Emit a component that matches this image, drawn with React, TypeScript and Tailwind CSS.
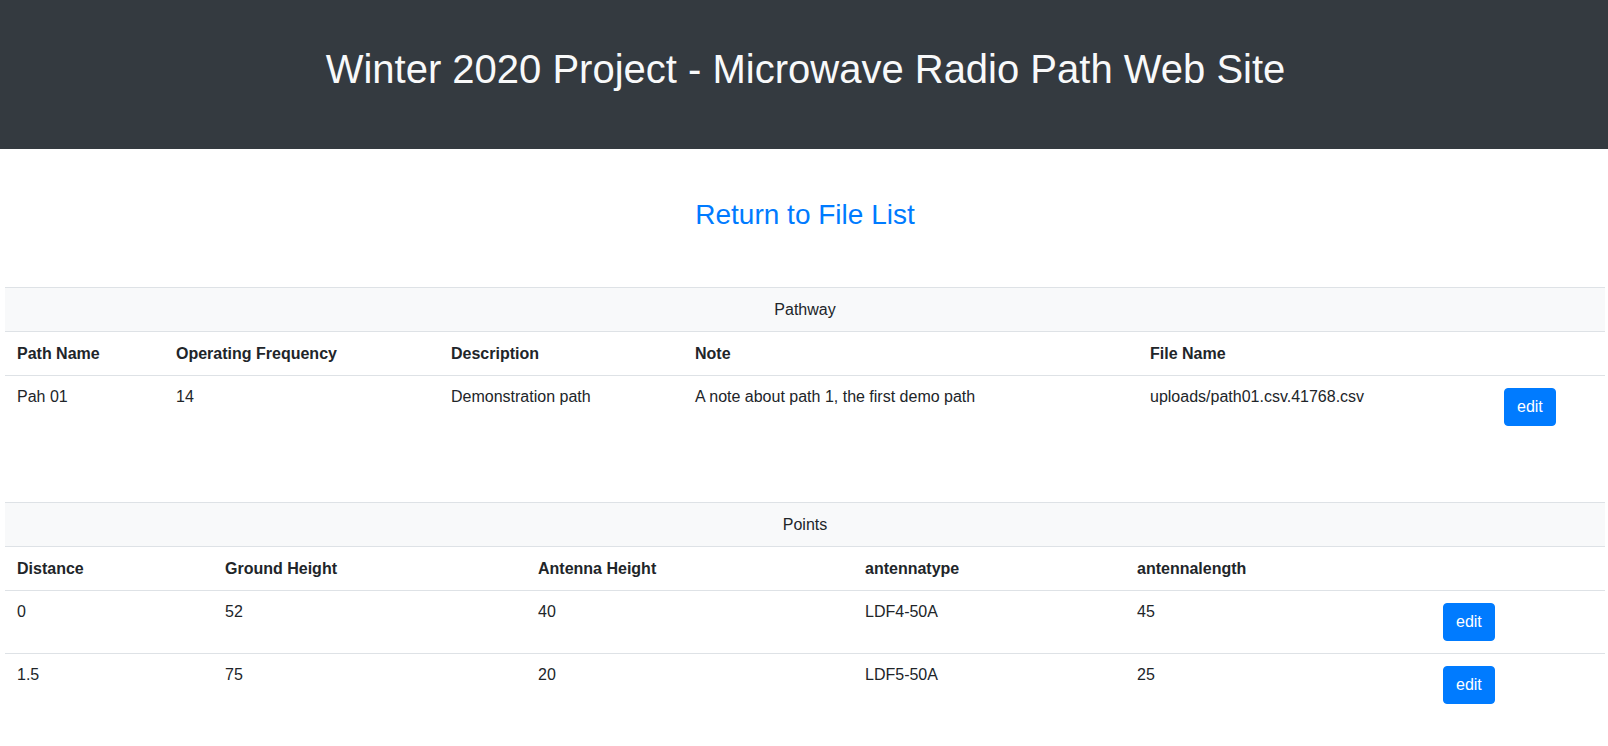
import React from "react";

type Table = {
  title: string;
  cols: string[];
  headers: string[];
  rows: string[][];
};

const pathway: Table = {
  title: "Pathway",
  cols: ["w-[159px]", "w-[275px]", "w-[244px]", "w-[455px]", "w-[354px]", "w-[113px]"],
  headers: ["Path Name", "Operating Frequency", "Description", "Note", "File Name"],
  rows: [
    [
      "Pah 01",
      "14",
      "Demonstration path",
      "A note about path 1, the first demo path",
      "uploads/path01.csv.41768.csv",
    ],
  ],
};

const points: Table = {
  title: "Points",
  cols: ["w-[208px]", "w-[313px]", "w-[327px]", "w-[272px]", "w-[306px]", "w-[174px]"],
  headers: ["Distance", "Ground Height", "Antenna Height", "antennatype", "antennalength"],
  rows: [
    ["0", "52", "40", "LDF4-50A", "45"],
    ["1.5", "75", "20", "LDF5-50A", "25"],
  ],
};

function DataTable({ table }: { table: Table }) {
  return (
    <table className="ml-[5px] w-[1600px] table-fixed border-collapse text-[16px] leading-6 text-[#212529]">
      <colgroup>
        {table.cols.map((c, i) => (
          <col key={i} className={c} />
        ))}
      </colgroup>
      <thead>
        <tr className="bg-[#f8f9fa]">
          <th
            colSpan={6}
            className="border-t border-[#dee2e6] pt-[10px] pb-[9px] text-center font-normal"
          >
            {table.title}
          </th>
        </tr>
        <tr>
          {table.headers.map((h) => (
            <th
              key={h}
              className="border-t border-[#dee2e6] px-3 pt-[10px] pb-[9px] text-left font-bold"
            >
              {h}
            </th>
          ))}
          <th className="border-t border-[#dee2e6]" />
        </tr>
      </thead>
      <tbody>
        {table.rows.map((row, r) => (
          <tr key={r}>
            {row.map((cell, i) => (
              <td
                key={i}
                className="border-t border-[#dee2e6] px-3 pt-[9px] align-top"
              >
                {cell}
              </td>
            ))}
            <td className="border-t border-[#dee2e6] px-3 py-3 align-top">
              <button
                type="button"
                className="rounded-[4px] border border-[#007bff] bg-[#007bff] px-3 py-[6px] text-[16px] leading-6 text-white"
              >
                edit
              </button>
            </td>
          </tr>
        ))}
      </tbody>
    </table>
  );
}

export default function App() {
  return (
    <div className="min-h-screen bg-white font-['Liberation_Sans',Arial,sans-serif]">
      {/* Header */}
      <div className="h-[149px] bg-[#343a40] pt-[45px] pl-[3px] text-center text-[40px] leading-[1.2] text-[#f8f9fa]">
        Winter 2020 Project - Microwave Radio Path Web Site
      </div>

      {/* Back link */}
      <div className="mt-[49px] pl-[2px] text-center text-[28px] leading-[1.2]">
        <a href="#" className="text-[#007bff]">
          Return to File List
        </a>
      </div>

      <div className="mt-[55px]">
        <DataTable table={pathway} />
      </div>

      <div className="mt-[64px]">
        <DataTable table={points} />
      </div>
    </div>
  );
}
